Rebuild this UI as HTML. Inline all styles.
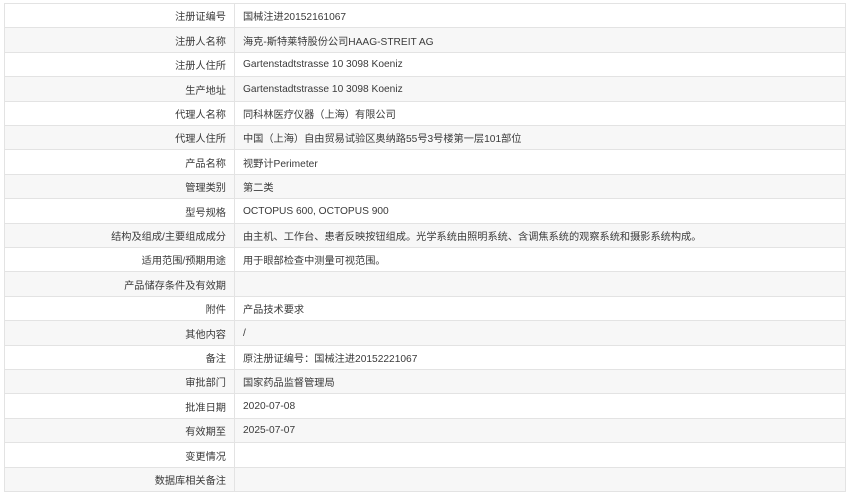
<!DOCTYPE html>
<html><head><meta charset="utf-8"><style>
body{margin:0;width:850px;height:494px;background:#fff;font-family:"Liberation Sans","Noto Sans CJK SC",sans-serif;font-size:10.2px;color:#3a3a3a;position:relative;overflow:hidden}
.r{position:absolute;left:4px;width:842px;border:1px solid #e3e3e3;box-sizing:border-box;display:flex;align-items:center}
.g{background:#f7f7f7}
.l{width:230px;text-align:right;padding-right:8px;box-sizing:border-box;border-right:1px solid #e3e3e3;height:100%;display:flex;align-items:center;justify-content:flex-end}
.v{padding-left:8px}
</style></head><body>
<div class="r" style="top:3px;height:25px"><div class="l">注册证编号</div><div class="v">国械注进20152161067</div></div>
<div class="r g" style="top:27px;height:26px"><div class="l">注册人名称</div><div class="v">海克-斯特莱特股份公司HAAG-STREIT AG</div></div>
<div class="r" style="top:52px;height:25px"><div class="l">注册人住所</div><div class="v">Gartenstadtstrasse 10 3098 Koeniz</div></div>
<div class="r g" style="top:76px;height:26px"><div class="l">生产地址</div><div class="v">Gartenstadtstrasse 10 3098 Koeniz</div></div>
<div class="r" style="top:101px;height:25px"><div class="l">代理人名称</div><div class="v">同科林医疗仪器（上海）有限公司</div></div>
<div class="r g" style="top:125px;height:25px"><div class="l">代理人住所</div><div class="v">中国（上海）自由贸易试验区奥纳路55号3号楼第一层101部位</div></div>
<div class="r" style="top:149px;height:26px"><div class="l">产品名称</div><div class="v">视野计Perimeter</div></div>
<div class="r g" style="top:174px;height:25px"><div class="l">管理类别</div><div class="v">第二类</div></div>
<div class="r" style="top:198px;height:26px"><div class="l">型号规格</div><div class="v">OCTOPUS 600, OCTOPUS 900</div></div>
<div class="r g" style="top:223px;height:25px"><div class="l">结构及组成/主要组成成分</div><div class="v">由主机、工作台、患者反映按钮组成。光学系统由照明系统、含调焦系统的观察系统和摄影系统构成。</div></div>
<div class="r" style="top:247px;height:25px"><div class="l">适用范围/预期用途</div><div class="v">用于眼部检查中测量可视范围。</div></div>
<div class="r g" style="top:271px;height:26px"><div class="l">产品储存条件及有效期</div><div class="v"></div></div>
<div class="r" style="top:296px;height:25px"><div class="l">附件</div><div class="v">产品技术要求</div></div>
<div class="r g" style="top:320px;height:26px"><div class="l">其他内容</div><div class="v">/</div></div>
<div class="r" style="top:345px;height:25px"><div class="l">备注</div><div class="v">原注册证编号：国械注进20152221067</div></div>
<div class="r g" style="top:369px;height:25px"><div class="l">审批部门</div><div class="v">国家药品监督管理局</div></div>
<div class="r" style="top:393px;height:26px"><div class="l">批准日期</div><div class="v">2020-07-08</div></div>
<div class="r g" style="top:418px;height:25px"><div class="l">有效期至</div><div class="v">2025-07-07</div></div>
<div class="r" style="top:442px;height:26px"><div class="l">变更情况</div><div class="v"></div></div>
<div class="r g" style="top:467px;height:25px"><div class="l">数据库相关备注</div><div class="v"></div></div>
</body></html>
